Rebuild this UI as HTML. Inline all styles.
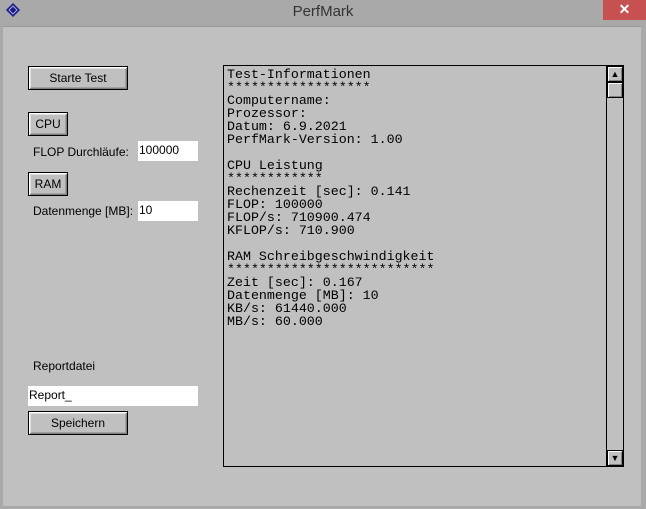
<!DOCTYPE html>
<html><head><style>
*{margin:0;padding:0;box-sizing:border-box}
body{width:646px;height:509px;background:#a9a9a9;position:relative;overflow:hidden;font-family:"Liberation Sans",sans-serif;font-size:12px;color:#000}
.a{position:absolute}
.title{left:0;top:0;width:646px;height:26px;background:#a9a9a9;text-align:center;line-height:24px;font-size:15px;color:#333}
.client{left:3px;top:26px;width:638px;height:480px;background:#c0c0c0;border-top:1px solid #999}
.btn{position:absolute;border:1px solid #000;background:#c0c0c0;box-shadow:inset 1px 1px 0 #fff,inset -1px -1px 0 #808080,inset 2px 2px 0 #dfdfdf,inset -2px -2px 0 #a0a0a0;text-align:center;font-size:12px}
.inp{position:absolute;background:#fff;font-size:12px;padding-left:1px}
.lbl{position:absolute;font-size:12px}
.box{left:223px;top:65px;width:401px;height:402px;border:1px solid #000;background:#c0c0c0}
.txt{position:absolute;left:3px;top:2px;font-family:"Liberation Mono",monospace;font-size:13.3px;line-height:13px;white-space:pre}
.sb{position:absolute;left:382px;top:0;width:17px;height:400px;border-left:1px solid #000;background:#c0c0c0}
.sbt{position:absolute;left:0;width:16px;height:16px;border:1px solid #000;background:#c0c0c0;box-shadow:inset 1px 1px 0 #fff,inset -1px -1px 0 #808080;font-size:9px;text-align:center;line-height:14px}
</style></head><body>
<div class="a title">PerfMark</div>
<svg class="a" style="left:5px;top:2px" width="16" height="16"><polygon points="8,1 15,8 8,15 1,8" fill="#1a1a8a"/><polygon points="8,4 12,8 8,12 4,8" fill="none" stroke="#aac" stroke-width="1"/></svg>
<div class="a" style="left:603px;top:0;width:43px;height:20px;background:#c75050;color:#fff;text-align:center;line-height:19px;font-size:14px;font-weight:bold">✕</div>
<div class="a client"></div>
<div class="btn" style="left:28px;top:66px;width:100px;height:24px;line-height:22px">Starte Test</div>
<div class="btn" style="left:28px;top:112px;width:40px;height:24px;line-height:22px">CPU</div>
<div class="lbl" style="left:33px;top:145px">FLOP Durchläufe:</div>
<div class="inp" style="left:138px;top:141px;width:60px;height:20px;line-height:19px">100000</div>
<div class="btn" style="left:28px;top:172px;width:40px;height:24px;line-height:22px">RAM</div>
<div class="lbl" style="left:33px;top:204px">Datenmenge [MB]:</div>
<div class="inp" style="left:138px;top:201px;width:60px;height:20px;line-height:19px">10</div>
<div class="lbl" style="left:33px;top:359px">Reportdatei</div>
<div class="inp" style="left:28px;top:386px;width:170px;height:20px;line-height:19px">Report_</div>
<div class="btn" style="left:28px;top:411px;width:100px;height:24px;line-height:22px">Speichern</div>
<div class="a box">
<div class="txt">Test-Informationen
******************
Computername:
Prozessor:
Datum: 6.9.2021
PerfMark-Version: 1.00

CPU Leistung
************
Rechenzeit [sec]: 0.141
FLOP: 100000
FLOP/s: 710900.474
KFLOP/s: 710.900

RAM Schreibgeschwindigkeit
**************************
Zeit [sec]: 0.167
Datenmenge [MB]: 10
KB/s: 61440.000
MB/s: 60.000</div>
<div class="sb">
<div class="sbt" style="top:0">▲</div>
<div class="sbt" style="top:16px;height:16px"></div>
<div class="sbt" style="top:384px">▼</div>
</div>
</div>
</body></html>
